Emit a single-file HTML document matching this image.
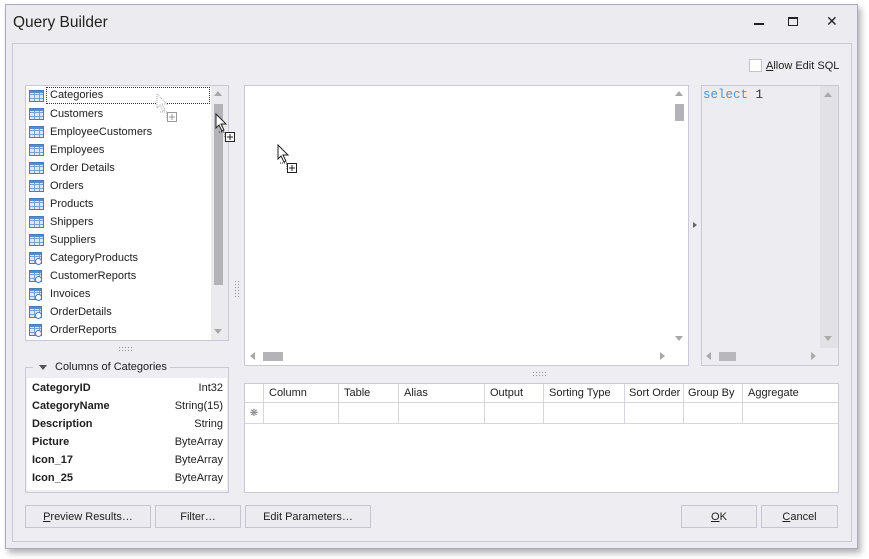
<!DOCTYPE html>
<html><head><meta charset="utf-8"><style>
*{box-sizing:border-box;margin:0;padding:0}
body{width:869px;height:559px;background:#fff;font-family:"Liberation Sans",sans-serif;font-size:11px;color:#202020;position:relative;overflow:hidden}
.a{position:absolute}
.win{left:5px;top:4px;width:853px;height:545px;background:#ececf0;border:1px solid #a9a9c0;box-shadow:3px 4px 6px rgba(0,0,0,.3)}
.panel{left:12px;top:43px;width:840px;height:499px;border:1px solid #c9c9d6;background:#ededf2}
.box{border:1px solid #c9c9d6;background:#fff}
.item{position:absolute;left:0;height:18px;line-height:19px}
.item span{position:absolute;left:24px;white-space:nowrap}
.ic{position:absolute;left:3px;top:3px;width:15px;height:12px;border:1px solid #4a7ab8;background:
linear-gradient(#5a8ccc 0 2px,transparent 2px),
repeating-linear-gradient(90deg,transparent 0 4px,#7aa0d0 4px 5px),
repeating-linear-gradient(transparent 0 3px,#7aa0d0 3px 4px),#dce8f6}
.btn{position:absolute;top:505px;height:23px;border:1px solid #c6c6d2;background:#ececf0;text-align:center;line-height:22px}
.hd{position:absolute;top:0;height:19px;line-height:19px;padding-left:5px;border-right:1px solid #d5d5e0;white-space:nowrap}
.cell{position:absolute;top:19px;height:21px;border-right:1px solid #d5d5e0}
.tri{width:0;height:0;position:absolute}
.dots{position:absolute;background:radial-gradient(#999 0.7px,transparent 0.8px) 0 0/3px 3px}
</style></head><body>
<div class="a win"></div>
<div class="a" style="left:13px;top:14px;font-size:15.5px;color:#222">Query Builder</div>
<div class="a" style="left:754px;top:23px;width:10px;height:2px;background:#222"></div>
<div class="a" style="left:788px;top:17px;width:10px;height:9px;border:1.5px solid #222;border-top-width:2px"></div>
<div class="a" style="left:826px;top:13px;font-size:14px;color:#222">✕</div>
<div class="a panel"></div>
<div class="a" style="left:749px;top:59px;width:13px;height:13px;border:1px solid #c3c3cf;background:#fff"></div>
<div class="a" style="left:766px;top:60px"><u>A</u>llow Edit SQL</div>

<!-- tables list -->
<div class="a box" style="left:25px;top:85px;width:204px;height:256px;overflow:hidden">
 <div class="a" style="left:0;top:0;width:186px;height:254px">
  <div class="item" style="top:1px"><div class="ic"></div><span style="left:20px;border:1px dotted #333;padding:0 3px;line-height:15px;width:164px">Categories</span></div>
  <div class="item" style="top:19px"><div class="ic"></div><span>Customers</span></div>
  <div class="item" style="top:37px"><div class="ic"></div><span>EmployeeCustomers</span></div>
  <div class="item" style="top:55px"><div class="ic"></div><span>Employees</span></div>
  <div class="item" style="top:73px"><div class="ic"></div><span>Order Details</span></div>
  <div class="item" style="top:91px"><div class="ic"></div><span>Orders</span></div>
  <div class="item" style="top:109px"><div class="ic"></div><span>Products</span></div>
  <div class="item" style="top:127px"><div class="ic"></div><span>Shippers</span></div>
  <div class="item" style="top:145px"><div class="ic"></div><span>Suppliers</span></div>
  <div class="item" style="top:163px"><div class="ic" style="width:13px"></div><div class="a" style="left:9px;top:9px;width:7px;height:7px;border-radius:50%;border:1.5px solid #4a7ab8;background:#fff"></div><span>CategoryProducts</span></div>
  <div class="item" style="top:181px"><div class="ic" style="width:13px"></div><div class="a" style="left:9px;top:9px;width:7px;height:7px;border-radius:50%;border:1.5px solid #4a7ab8;background:#fff"></div><span>CustomerReports</span></div>
  <div class="item" style="top:199px"><div class="ic" style="width:13px"></div><div class="a" style="left:9px;top:9px;width:7px;height:7px;border-radius:50%;border:1.5px solid #4a7ab8;background:#fff"></div><span>Invoices</span></div>
  <div class="item" style="top:217px"><div class="ic" style="width:13px"></div><div class="a" style="left:9px;top:9px;width:7px;height:7px;border-radius:50%;border:1.5px solid #4a7ab8;background:#fff"></div><span>OrderDetails</span></div>
  <div class="item" style="top:235px"><div class="ic" style="width:13px"></div><div class="a" style="left:9px;top:9px;width:7px;height:7px;border-radius:50%;border:1.5px solid #4a7ab8;background:#fff"></div><span>OrderReports</span></div>
 </div>
 <div class="a" style="left:185px;top:0;width:17px;height:254px;background:#ebebef"></div>
 <div class="a" style="left:188px;top:18px;width:9px;height:181px;background:#b4b4b8"></div>
 <div class="tri" style="left:188px;top:5px;border:4px solid transparent;border-bottom:5px solid #a8a8a8;border-top:0"></div>
 <div class="tri" style="left:188px;top:243px;border:4px solid transparent;border-top:5px solid #a8a8a8;border-bottom:0"></div>
</div>

<div class="dots" style="left:118px;top:346px;width:16px;height:6px"></div>
<div class="dots" style="left:234px;top:280px;width:6px;height:18px"></div>
<div class="dots" style="left:532px;top:371px;width:16px;height:6px"></div>

<!-- columns group -->
<div class="a" style="left:25px;top:367px;width:204px;height:126px;border:1px solid #c9c9d6;border-top:none"></div>
<div class="a" style="left:25px;top:367px;width:8px;height:1px;background:#c9c9d6"></div>
<div class="a" style="left:170px;top:367px;width:59px;height:1px;background:#c9c9d6"></div>
<div class="tri" style="left:39px;top:365px;border:4px solid transparent;border-top:5px solid #555;border-bottom:0"></div>
<div class="a" style="left:55px;top:361px">Columns of Categories</div>
<div class="a" style="left:27px;top:378px;width:200px;height:112px;background:#fff"></div>
<div class="a" style="left:32px;top:379px;width:191px;line-height:18px">
 <div style="display:flex;justify-content:space-between"><b>CategoryID</b><span>Int32</span></div>
 <div style="display:flex;justify-content:space-between"><b>CategoryName</b><span>String(15)</span></div>
 <div style="display:flex;justify-content:space-between"><b>Description</b><span>String</span></div>
 <div style="display:flex;justify-content:space-between"><b>Picture</b><span>ByteArray</span></div>
 <div style="display:flex;justify-content:space-between"><b>Icon_17</b><span>ByteArray</span></div>
 <div style="display:flex;justify-content:space-between"><b>Icon_25</b><span>ByteArray</span></div>
</div>

<!-- diagram -->
<div class="a box" style="left:244px;top:85px;width:445px;height:281px">
 <div class="a" style="left:430px;top:18px;width:9px;height:17px;background:#b4b4b8"></div>
 <div class="tri" style="left:430px;top:5px;border:4px solid transparent;border-bottom:5px solid #a8a8a8;border-top:0"></div>
 <div class="tri" style="left:430px;top:250px;border:4px solid transparent;border-top:5px solid #a8a8a8;border-bottom:0"></div>
 <div class="tri" style="left:5px;top:266px;border:4px solid transparent;border-right:5px solid #a8a8a8;border-left:0"></div>
 <div class="a" style="left:18px;top:266px;width:20px;height:9px;background:#b4b4b8"></div>
 <div class="tri" style="left:415px;top:266px;border:4px solid transparent;border-left:5px solid #a8a8a8;border-right:0"></div>
</div>
<div class="tri" style="left:693px;top:222px;border:3.5px solid transparent;border-left:4px solid #666;border-right:0"></div>

<!-- sql -->
<div class="a" style="left:701px;top:85px;width:138px;height:281px;border:1px solid #c9c9d6;background:#ececf1">
 <div class="a" style="left:1px;top:2px;font-family:'Liberation Mono',monospace;font-size:12.5px;color:#4b93d8">select <span style="color:#333">1</span></div>
 <div class="a" style="left:118px;top:0;width:18px;height:262px;background:#e2e2e6"></div>
 <div class="tri" style="left:122px;top:6px;border:4px solid transparent;border-bottom:5px solid #aaa;border-top:0"></div>
 <div class="tri" style="left:122px;top:250px;border:4px solid transparent;border-top:5px solid #aaa;border-bottom:0"></div>
 <div class="tri" style="left:4px;top:266px;border:4px solid transparent;border-right:5px solid #aaa;border-left:0"></div>
 <div class="a" style="left:17px;top:266px;width:17px;height:9px;background:#b8b8bc"></div>
 <div class="tri" style="left:109px;top:266px;border:4px solid transparent;border-left:5px solid #aaa;border-right:0"></div>
</div>

<!-- grid -->
<div class="a box" style="left:244px;top:383px;width:595px;height:110px">
 <div class="a" style="left:0;top:0;width:593px;height:19px;border-bottom:1px solid #d5d5e0"></div>
 <div class="a" style="left:0;top:19px;width:593px;height:21px;border-bottom:1px solid #d5d5e0"></div>
 <div class="hd" style="left:0;width:19px;padding:0"></div>
 <div class="hd" style="left:19px;width:75px">Column</div>
 <div class="hd" style="left:94px;width:60px">Table</div>
 <div class="hd" style="left:154px;width:86px">Alias</div>
 <div class="hd" style="left:240px;width:59px">Output</div>
 <div class="hd" style="left:299px;width:81px">Sorting Type</div>
 <div class="hd" style="left:380px;width:59px;padding-left:4px">Sort Order</div>
 <div class="hd" style="left:439px;width:59px;padding-left:4px">Group By</div>
 <div class="hd" style="left:498px;width:95px;border:none">Aggregate</div>
 <div class="cell" style="left:0;width:19px;text-align:center;color:#777;line-height:21px;font-size:10px">❋</div>
 <div class="cell" style="left:19px;width:75px"></div><div class="cell" style="left:94px;width:60px"></div>
 <div class="cell" style="left:154px;width:86px"></div><div class="cell" style="left:240px;width:59px"></div>
 <div class="cell" style="left:299px;width:81px"></div><div class="cell" style="left:380px;width:59px"></div>
 <div class="cell" style="left:439px;width:59px"></div>
</div>

<div class="btn" style="left:25px;width:126px"><u>P</u>review Results…</div>
<div class="btn" style="left:155px;width:86px">Filter…</div>
<div class="btn" style="left:245px;width:126px">Edit Parameters…</div>
<div class="btn" style="left:681px;width:76px"><u>O</u>K</div>
<div class="btn" style="left:761px;width:77px"><u>C</u>ancel</div>

<!-- cursors (on top) -->
<svg class="a" style="left:155px;top:92px" width="145" height="85" viewBox="0 0 145 85">
 <path d="M2 2 L2 16 L5 13 L8 19 L10 18 L7 12 L12 12 Z" fill="#fff" stroke="#aaa" stroke-dasharray="1 1"/>
 <path d="M5 20h7v6" fill="none" stroke="#aaa" stroke-dasharray="1 1"/>
 <rect x="12.5" y="20.5" width="9" height="9" fill="#fff" stroke="#999"/><path d="M17 22v6M14 25h6" stroke="#999"/>
 <path d="M61 22 L61 36 L64 33 L67 39 L69 38 L66 32 L71 32 Z" fill="#fff" stroke="#222"/>
 <path d="M64 40h6v6" fill="none" stroke="#222" stroke-dasharray="1 1"/>
 <rect x="70.5" y="40.5" width="9" height="9" fill="#fff" stroke="#222"/><path d="M75 42v6M72 45h6" stroke="#222"/>
 <path d="M123 53 L123 67 L126 64 L129 70 L131 69 L128 63 L133 63 Z" fill="#fff" stroke="#222"/>
 <path d="M125 71h7v6" fill="none" stroke="#222" stroke-dasharray="1 1"/>
 <rect x="132.5" y="71.5" width="9" height="9" fill="#fff" stroke="#222"/><path d="M137 73v6M134 76h6" stroke="#222"/>
</svg>
</body></html>
